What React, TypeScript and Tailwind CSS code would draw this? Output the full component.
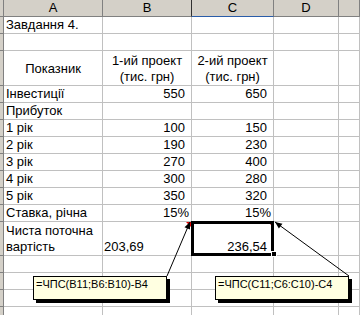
import type { ReactNode } from 'react';

type Kind = 'text' | 'head' | 'npv';

type RowData = {
  h: string;
  a?: string;
  b?: string;
  c?: string;
  pct?: boolean;
  kind?: Kind;
};

const rows: RowData[] = [
  { h: 'h-[17px]', a: 'Завдання 4.' },
  { h: 'h-[17px]' },
  { h: 'h-[35px]', kind: 'head', a: 'Показник', b: '1-ий проект\n(тис. грн)', c: '2-ий проект\n(тис. грн)' },
  { h: 'h-[17px]', a: 'Інвестиції', b: '550', c: '650' },
  { h: 'h-[17px]', a: 'Прибуток' },
  { h: 'h-[17px]', a: '1 рік', b: '100', c: '150' },
  { h: 'h-[17px]', a: '2 рік', b: '190', c: '230' },
  { h: 'h-[17px]', a: '3 рік', b: '270', c: '400' },
  { h: 'h-[17px]', a: '4 рік', b: '300', c: '280' },
  { h: 'h-[17px]', a: '5 рік', b: '350', c: '320' },
  { h: 'h-[17px]', a: 'Ставка, річна', b: '15%', c: '15%', pct: true },
  { h: 'h-[34px]', kind: 'npv', a: 'Чиста поточна\nвартість', b: '203,69', c: '236,54' },
  { h: 'h-[17px]' },
  { h: 'h-[17px]' },
  { h: 'h-[17px]' },
  { h: 'h-[17px]' },
];

const grid = 'shrink-0 flex border-r border-b border-[#c0c0c0] leading-[16px]';

function Cell({ w, className = '', children }: { w: string; className?: string; children?: ReactNode }) {
  return <div className={`${w} ${grid} ${className}`}>{children}</div>;
}

// comment marker in the cell's top right corner
function Marker() {
  return (
    <span className="absolute top-0 right-0 w-0 h-0 border-l-[5px] border-l-transparent border-t-[5px] border-t-[#e00000]" />
  );
}

function SheetRow({ r }: { r: RowData }) {
  const num = r.pct ? 'items-end justify-end pr-[2px]' : 'items-end justify-end pr-[6px]';

  if (r.kind === 'head') {
    return (
      <div className={`flex ${r.h}`}>
        <div className="w-[4px] shrink-0 bg-[#d4d0c8] border-r border-b border-[#808080]" />
        <Cell w="w-[99px]" className="items-center justify-center pt-[1px]">{r.a}</Cell>
        <Cell w="w-[89px]" className="items-end justify-center text-center whitespace-pre-line">{r.b}</Cell>
        <Cell w="w-[82px]" className="items-end justify-center text-center whitespace-pre-line">{r.c}</Cell>
        <Cell w="w-[65px]" />
        <Cell w="flex-1" />
      </div>
    );
  }

  if (r.kind === 'npv') {
    return (
      <div className={`flex ${r.h}`}>
        <div className="w-[4px] shrink-0 bg-[#d4d0c8] border-r border-b border-[#808080]" />
        <Cell w="w-[99px]" className="items-end pl-[2px] whitespace-pre-line">{r.a}</Cell>
        <Cell w="w-[89px]" className="relative items-end pl-[1px]">
          {r.b}
          <Marker />
        </Cell>
        <Cell w="w-[82px]" className="relative items-end justify-end pr-[6px]">
          {r.c}
          <Marker />
          {/* active cell frame and fill handle */}
          <span className="absolute -inset-[1px] border-[3px] border-black" />
          <span className="absolute -right-[4px] -bottom-[2px] w-[6px] h-[6px] bg-black border border-white" />
        </Cell>
        <Cell w="w-[65px]" />
        <Cell w="flex-1" />
      </div>
    );
  }

  return (
    <div className={`flex ${r.h}`}>
      <div className="w-[4px] shrink-0 bg-[#d4d0c8] border-r border-b border-[#808080]" />
      <Cell w="w-[99px]" className="items-end pl-[2px] whitespace-nowrap">{r.a}</Cell>
      <Cell w="w-[89px]" className={num}>{r.b}</Cell>
      <Cell w="w-[82px]" className={num}>{r.c}</Cell>
      <Cell w="w-[65px]" />
      <Cell w="flex-1" />
    </div>
  );
}

function ColumnHeaders() {
  const hd = 'shrink-0 flex items-center justify-center bg-[#d4d0c8] border-r border-b border-[#808080] leading-[16px]';
  return (
    <div className="flex h-[17px]">
      <div className="w-[4px] shrink-0 bg-[#d4d0c8] border-r border-b border-[#808080]" />
      <div className={`w-[99px] ${hd}`}>A</div>
      <div className={`w-[89px] ${hd} border-r-[#303030]`}>B</div>
      <div className={`w-[82px] ${hd} border-b-[#2a5ca8]`}>C</div>
      <div className={`w-[65px] ${hd}`}>D</div>
      <div className={`flex-1 ${hd}`} />
    </div>
  );
}

function arrowHead(x1: number, y1: number, x2: number, y2: number, len = 7, half = 3) {
  const dx = x2 - x1;
  const dy = y2 - y1;
  const l = Math.hypot(dx, dy);
  const ux = dx / l;
  const uy = dy / l;
  const bx = x2 - ux * len;
  const by = y2 - uy * len;
  return `${x2},${y2} ${bx - uy * half},${by + ux * half} ${bx + uy * half},${by - ux * half}`;
}

function Callouts() {
  return (
    <svg className="absolute inset-0 pointer-events-none" width="360" height="315">
      <line x1="167" y1="276" x2="190" y2="222" stroke="#000" strokeWidth="1" />
      <polygon points={arrowHead(167, 276, 190, 222)} fill="#000" />
      <line x1="349" y1="276" x2="275" y2="222" stroke="#000" strokeWidth="1" />
      <polygon points={arrowHead(349, 276, 275, 222)} fill="#000" />
    </svg>
  );
}

function Note({ className, children }: { className: string; children: ReactNode }) {
  return (
    <div
      className={`absolute h-[24px] bg-[#ffffe1] border border-black shadow-[3px_3px_0_0_#000] px-[2px] text-[11px] leading-[14px] whitespace-nowrap ${className}`}
    >
      {children}
    </div>
  );
}

export default function App() {
  return (
    <div className="relative w-[360px] h-[315px] overflow-hidden bg-white text-black text-[13px] font-['Liberation_Sans',Arial,sans-serif]">
      <ColumnHeaders />
      {rows.map((r, i) => (
        <SheetRow key={i} r={r} />
      ))}
      <Callouts />
      <Note className="left-[33px] top-[276px] w-[134px]">=ЧПС(B11;B6:B10)-B4</Note>
      <Note className="left-[215px] top-[276px] w-[134px]">=ЧПС(C11;C6:C10)-C4</Note>
    </div>
  );
}
